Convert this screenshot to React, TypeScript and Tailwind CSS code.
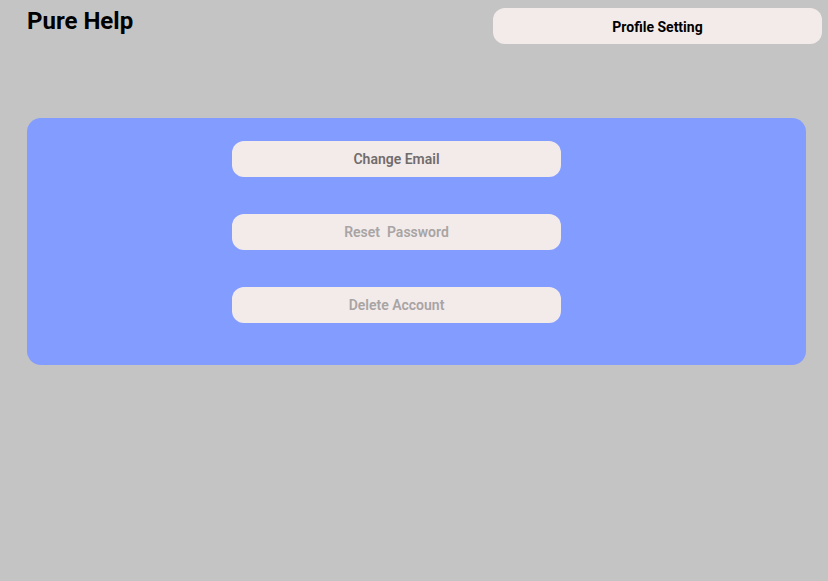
import React from 'react';

const actions = [
  { label: 'Change Email', tone: 'text-[#716c6c]' },
  { label: 'Reset  Password', tone: 'text-[#a8a4a4]' },
  { label: 'Delete Account', tone: 'text-[#a8a4a4]' },
];

const App: React.FC = () => {
  return (
    <div className="min-h-[581px] w-full bg-[#c4c4c4] font-['Roboto',sans-serif]">
      <header className="flex items-start justify-between pl-[27px] pr-[6px] pt-[8px]">
        <h1 className="text-[24px] font-bold leading-[26px] text-black">Pure Help</h1>
        <button className="h-[36px] w-[329px] rounded-[12px] bg-[#f3ebea] pt-[2px] text-[14px] font-bold text-black">
          Profile Setting
        </button>
      </header>

      <section className="ml-[27px] mt-[74px] flex h-[247px] w-[779px] flex-col gap-[37px] rounded-[14px] bg-[#839cff] pl-[205px] pt-[23px]">
        {actions.map((a) => (
          <button
            key={a.label}
            className={`h-[36px] w-[329px] rounded-[12px] bg-[#f3ebea] text-[14px] font-semibold whitespace-pre ${a.tone}`}
          >
            {a.label}
          </button>
        ))}
      </section>
    </div>
  );
};

export default App;
